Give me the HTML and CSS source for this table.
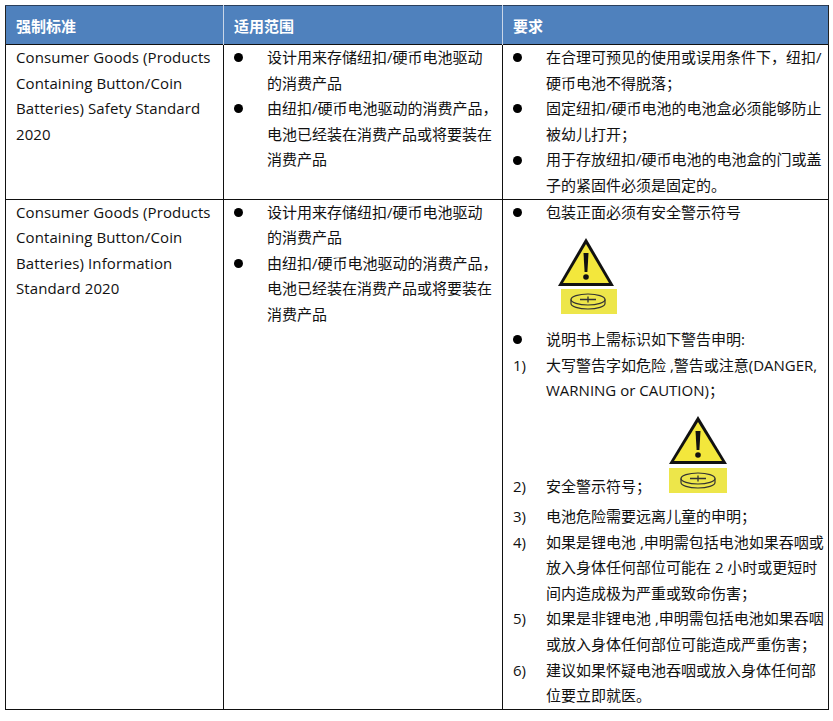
FILE: index.html
```html
<!DOCTYPE html>
<html lang="zh-CN">
<head>
<meta charset="utf-8">
<title>纽扣电池标准</title>
<link rel="stylesheet" href="styles.css">
</head>
<body>
<table class="std">
  <colgroup>
    <col class="c1"><col class="c2"><col class="c3">
  </colgroup>
  <thead>
    <tr><th>强制标准</th><th>适用范围</th><th>要求</th></tr>
  </thead>
  <tbody>
    <tr>
      <td class="name">Consumer Goods (Products<br>Containing Button/Coin<br>Batteries) Safety Standard<br>2020</td>
      <td>
        <div class="item"><span class="mark"><i class="dot"></i></span><span class="txt">设计用来存储纽扣/硬币电池驱动<br>的消费产品</span></div>
        <div class="item"><span class="mark"><i class="dot"></i></span><span class="txt">由纽扣/硬币电池驱动的消费产品，<br>电池已经装在消费产品或将要装在<br>消费产品</span></div>
      </td>
      <td>
        <div class="item"><span class="mark"><i class="dot"></i></span><span class="txt">在合理可预见的使用或误用条件下，纽扣/<br>硬币电池不得脱落；</span></div>
        <div class="item"><span class="mark"><i class="dot"></i></span><span class="txt">固定纽扣/硬币电池的电池盒必须能够防止<br>被幼儿打开；</span></div>
        <div class="item"><span class="mark"><i class="dot"></i></span><span class="txt">用于存放纽扣/硬币电池的电池盒的门或盖<br>子的紧固件必须是固定的。</span></div>
      </td>
    </tr>
    <tr>
      <td class="name">Consumer Goods (Products<br>Containing Button/Coin<br>Batteries) Information<br>Standard 2020</td>
      <td>
        <div class="item"><span class="mark"><i class="dot"></i></span><span class="txt">设计用来存储纽扣/硬币电池驱动<br>的消费产品</span></div>
        <div class="item"><span class="mark"><i class="dot"></i></span><span class="txt">由纽扣/硬币电池驱动的消费产品，<br>电池已经装在消费产品或将要装在<br>消费产品</span></div>
      </td>
      <td>
        <div class="item"><span class="mark"><i class="dot"></i></span><span class="txt">包装正面必须有安全警示符号</span></div>
        <div class="sign-block">
          <svg class="sign" viewBox="0 0 62 78" width="62" height="78" aria-hidden="true">
            <polygon points="29,1 1,49 57,49" fill="#111"/>
            <polygon points="29,7 6,46 52,46" fill="#f3e73c"/>
            <polygon points="26.5,16 31.5,16 30.4,35 27.6,35" fill="#111"/>
            <circle cx="29" cy="40" r="2.8" fill="#111"/>
            <rect x="4" y="52" width="56" height="25" fill="#ede64a"/>
            <ellipse cx="31" cy="62.5" rx="17" ry="5.5" fill="none" stroke="#333" stroke-width="1.2"/>
            <path d="M14,62.5 v4 a17,5.5 0 0 0 34,0 v-4" fill="none" stroke="#333" stroke-width="1.2"/>
            <path d="M23,62.5 h16 M31,59.5 v6" stroke="#333" stroke-width="1.3"/>
          </svg>
        </div>
        <div class="item"><span class="mark"><i class="dot"></i></span><span class="txt">说明书上需标识如下警告申明:</span></div>
        <div class="item"><span class="mark">1)</span><span class="txt">大写警告字如危险 ,警告或注意(DANGER,<br>WARNING or CAUTION)；</span></div>
        <div class="item tall"><span class="mark">2)</span><span class="txt">安全警示符号；</span>
          <svg class="sign sign2" viewBox="0 0 62 78" width="62" height="80" aria-hidden="true">
            <polygon points="31,1 2,49 60,49" fill="#111"/>
            <polygon points="31,7 7,46 55,46" fill="#f3e73c"/>
            <polygon points="28.5,16 33.5,16 32.4,35 29.6,35" fill="#111"/>
            <circle cx="31" cy="40" r="2.8" fill="#111"/>
            <rect x="2" y="53" width="58" height="25" fill="#ede64a"/>
            <ellipse cx="31" cy="63.5" rx="17" ry="5.5" fill="none" stroke="#333" stroke-width="1.2"/>
            <path d="M14,63.5 v4 a17,5.5 0 0 0 34,0 v-4" fill="none" stroke="#333" stroke-width="1.2"/>
            <path d="M23,63.5 h16 M31,60.5 v6" stroke="#333" stroke-width="1.3"/>
          </svg>
        </div>
        <div class="item"><span class="mark">3)</span><span class="txt">电池危险需要远离儿童的申明；</span></div>
        <div class="item"><span class="mark">4)</span><span class="txt">如果是锂电池 ,申明需包括电池如果吞咽或<br>放入身体任何部位可能在 2 小时或更短时<br>间内造成极为严重或致命伤害；</span></div>
        <div class="item"><span class="mark">5)</span><span class="txt">如果是非锂电池 ,申明需包括电池如果吞咽<br>或放入身体任何部位可能造成严重伤害；</span></div>
        <div class="item"><span class="mark">6)</span><span class="txt">建议如果怀疑电池吞咽或放入身体任何部<br>位要立即就医。</span></div>
      </td>
    </tr>
  </tbody>
</table>
</body>
</html>
```
FILE: styles.css
```css
html, body {
  margin: 0;
  padding: 0;
  background: #ffffff;
}
body {
  padding: 5px 0 0 5px;
  font-family: "Open Sans", "Noto Sans CJK SC", sans-serif;
  font-size: 15px;
  color: #111111;
}
.std {
  border-collapse: collapse;
  table-layout: fixed;
  width: 823px;
}
.c1 { width: 218px; }
.c2 { width: 279px; }
.c3 { width: 326px; }
.std th {
  background: #4f81bd;
  color: #ffffff;
  font-weight: bold;
  text-align: left;
  height: 39px;
  padding: 0 10px;
  box-sizing: border-box;
  font-size: 15px;
  border-top: 1.5px solid #2a3f5c;
  border-left: 1px solid #c9d6e8;
  border-right: 1px solid #c9d6e8;
}
.std th:first-child { border-left: 1.5px solid #222; }
.std th:last-child { border-right: 1.5px solid #222; }
.std td {
  border: 1.5px solid #111;
  vertical-align: top;
  padding: 0 4px 0 10px;
  line-height: 25.6px;
  white-space: nowrap;
}
.name { letter-spacing: 0.1px; }
.item {
  display: flex;
  align-items: flex-start;
}
.mark {
  flex: 0 0 33px;
  width: 33px;
  height: 25.6px;
  display: flex;
  align-items: center;
}
.dot {
  display: block;
  width: 9px;
  height: 9px;
  border-radius: 50%;
  background: #000;
}
.sign-block {
  height: 102px;
  padding: 12px 0 0 44px;
  box-sizing: border-box;
}
.sign { display: block; }
.item.tall {
  height: 100px;
  align-items: flex-end;
  padding-bottom: 4px;
  box-sizing: border-box;
}
.sign2 {
  margin-left: 16px;
  margin-bottom: 6px;
}
```
